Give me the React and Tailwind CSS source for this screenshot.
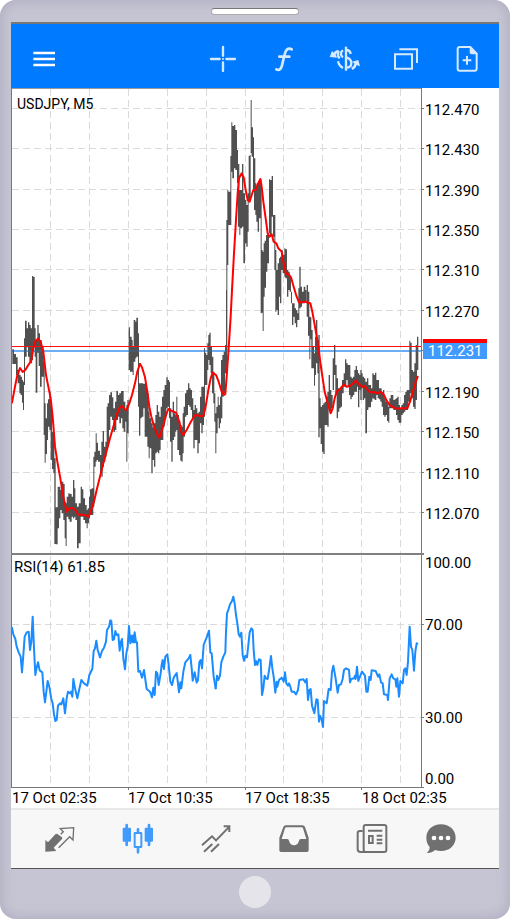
import React from "react";

// Chart series are stored in thirds of a pixel, section by section.
// Each bar is: left edge, right edge, high, low.
const sections = [
  {
    x: 0,
    y: 780,
    bars: `37 42 268 312|42 48 282 312|48 53 292 345|53 58 330 370|58 62 345 400|62 66 350 405|66 69 360 428|69 72 365 450|72 75 235 375|75 80 182 290|80 84 205 262|84 88 187 290|88 92 195 305|92 96 205 310|96 99 48 300|99 104 50 262|104 107 205 290|107 112 240 398|112 116 195 278|116 120 220 318|120 125 240 380|125 131 260 350|131 134 305 525|134 137 430 608|137 141 475 582|141 144 430 540|144 148 418 500|148 152 395 510|152 156 435 600|156 160 515 627|160 163 525 640|163 167 595 852|167 173 742 853|173 177 680 805|177 181 680 775|181 185 690 750|185 190 665 760|190 194 672 780|194 197 725 835|197 200 730 858|200 205 710 770|205 209 700 778|209 215 702 785|215 219 710 770|219 223 660 775|223 226 685 770|226 231 730 780|231 236 740 865|236 242 730 850|242 246 680 770|246 250 688 770|250 255 715 780|255 260 735 790|260 263 750 805|263 267 745 790|267 270 710 775|270 275 688 765|275 280 685 765|280 283 590 740|283 287 575 620|287 290 520 605|290 294 548 600|294 300 572 605|300 304 585 640|304 308 545 650|308 312 513 620|312 316 560 605|316 320 545 590|320 323 440 570|323 327 430 560|327 331 405 510|331 336 397 470|336 340 412 480|340 345 445 515|345 349 425 510|349 354 393 480|354 358 405 470|358 363 400 490|363 367 393 475|367 371 393 505|371 376 425 515|376 379 450 485|379 382 435 605|382 386 420 520`,
    average:
      "36,428 45,380 52,345 60,324 68,336 76,330 85,315 94,302 100,265 107,242 114,236 122,245 130,275 138,345 146,385 152,415 158,470 165,560 172,605 180,650 190,710 196,738 200,755 208,745 218,744 228,752 234,764 245,764 256,766 266,770 274,750 282,725 290,690 310,610 330,535 350,465 358,445 366,438 374,448 380,450 388,430 396,405 405,370 412,335 420,312",
  },
  {
    x: 360,
    y: 870,
    bars: `26 30 112 240|30 35 140 245|35 38 150 245|38 41 170 255|41 46 90 215|46 49 95 205|49 54 83 200|54 57 130 350|57 61 280 437|61 65 280 385|65 70 280 380|70 74 282 355|74 78 280 440|78 82 300 440|82 86 310 470|86 89 365 505|89 94 385 475|94 98 400 550|98 102 412 510|102 106 400 530|106 110 375 490|110 114 345 485|114 118 365 490|118 122 380 480|122 126 350 450|126 130 320 450|130 134 300 410|134 139 285 385|139 143 262 355|143 147 270 350|147 150 275 385|150 154 355 455|154 158 380 515|158 162 335 450|162 166 370 440|166 169 375 425|169 172 320 420|172 177 375 480|177 181 395 495|181 185 405 512|185 188 410 515|188 191 370 490|191 195 350 440|195 199 310 380|199 204 300 375|204 208 280 345|208 212 295 350|212 216 300 360|216 220 325 385|220 224 360 475|224 228 345 450|228 232 355 450|232 236 370 490|236 240 365 460|240 244 320 400|244 248 290 430|248 252 290 405|252 255 175 380|255 258 188 285|258 262 195 285|262 265 160 240|265 268 135 210|268 272 128 225|272 276 170 250|276 280 200 310|280 283 245 340|283 286 310 395|286 289 370 490|289 293 350 430|293 296 320 385|296 300 345 415|300 303 320 400|303 307 210 385|307 311 195 320|311 315 185 310|315 318 165 250|318 321 0 245`,
    average:
      "60,222 66,232 75,262 82,305 88,350 94,380 102,408 110,430 118,443 124,425 132,400 138,375 145,357 155,363 168,368 178,395 185,430 190,435 200,420 210,400 225,375 240,378 250,378 257,350 265,300 272,265 278,248 288,255 296,275 305,305 312,315 316,312 320,260 326,175 332,80 336,0",
  },
  {
    x: 645,
    y: 270,
    bars: `34 37 390 780|37 40 300 525|40 46 305 405|46 49 198 405|49 52 97 245|52 57 108 265|57 61 105 235|61 66 120 240|66 69 180 280|69 73 222 410|73 76 300 435|76 81 300 415|81 85 222 410|85 90 310 520|90 94 330 460|94 98 345 470|98 101 310 425|101 104 198 330|104 107 195 330|107 110 30 190|110 114 112 200|114 117 142 305|117 121 205 360|121 124 280 375|124 128 290 395|128 132 280 425|132 137 270 385|137 140 270 670|140 143 480 668|143 146 485 723|146 149 460 620|149 153 452 593|153 157 435 545|157 162 430 520|162 165 268 430|165 170 270 435|170 174 258 380|174 178 375 440|178 181 375 540|181 184 480 665|184 188 540 660|188 192 520 675|192 195 505 620|195 199 500 640|199 203 480 540|203 208 495 550|208 211 475 560|211 216 478 565|216 220 540 620|220 224 545 600|224 228 560 605|228 231 605 640|231 235 640 705|235 239 640 680|239 243 655 700|243 247 660 712|247 250 670 690|250 253 595 690|253 257 530 655|257 261 590 650|261 266 605 640|266 271 590 640|271 275 600 635`,
    average:
      "51,600 57,490 63,390 68,310 72,265 80,250 86,262 92,300 98,330 104,335 110,315 115,300 122,300 128,283 136,267 140,290 145,335 152,385 158,430 164,440 170,433 176,455 184,460 190,475 200,485 206,520 213,552 220,552 228,562 236,590 245,620 252,637 262,637 270,635 278,638 286,640 292,665 300,710 306,745 311,775",
  },
  {
    x: 900,
    y: 960,
    bars: `20 24 -105 -10|24 28 -85 47|28 31 -10 118|31 34 -8 58|34 38 30 145|38 42 80 145|42 45 100 197|45 48 50 165|48 52 0 130|52 55 60 160|55 59 45 352|59 62 235 325|62 66 260 372|66 70 255 395|70 74 250 402|74 78 245 315|78 82 230 315|82 86 215 320|86 90 165 260|90 94 210 270|94 98 225 265|98 102 115 210|102 106 75 165|106 110 135 225|110 114 175 295|114 118 205 275|118 122 210 265|122 126 200 260|126 131 180 220|131 135 160 200|135 139 118 200|139 143 130 180|143 147 135 200|147 151 135 225|151 155 170 238|155 159 175 230|159 163 170 225|163 167 150 215|167 171 138 215|171 174 150 200|174 178 160 262|178 181 165 210|181 185 150 240|185 188 160 205|188 192 170 240|192 196 175 235|196 201 185 340|201 205 175 270|205 209 195 262|209 213 195 262|213 217 205 245|217 221 160 235|221 225 165 238|225 229 158 240|229 233 180 225|233 237 180 235|237 241 205 238|241 245 205 245|245 249 215 260|249 253 210 285|253 257 235 290|257 261 245 285|261 265 250 303|265 268 260 308|268 272 235 265|272 276 225 265|276 280 225 265|280 284 240 270|284 288 238 270|288 292 235 285|292 296 230 300|296 300 255 308|300 304 265 308|304 308 255 285|308 312 250 280|312 316 225 275|316 320 215 270|320 324 210 270|324 328 210 245|328 331 62 245|331 335 68 220|335 339 150 235|339 343 155 260|343 347 130 267|347 351 75 240|351 355 50 150`,
    average:
      "56,85 62,135 68,175 74,215 82,245 92,280 98,265 104,235 110,215 120,207 132,193 140,200 150,198 160,190 168,182 176,192 186,200 194,198 202,208 210,217 222,216 234,220 242,215 252,225 260,242 270,256 280,262 290,266 305,265 322,265 330,245 340,212 346,190 353,170",
  },
];

const rsi = [
  {
    x: 0,
    points:
      "36,248 40,268 46,282 50,305 56,322 62,335 66,382 70,330 74,275 80,262 86,260 90,315 94,290 98,215 102,310 106,390 110,368 114,352 119,376 127,382 131,440 135,472 139,440 143,408 148,425 154,462 158,475 162,508 166,528 170,525 174,482 180,475 184,478 190,460 195,505 200,460 204,440 210,445 213,440 217,455 220,402 225,430 232,460 238,432 244,405 252,415 262,422 268,390 277,372 281,318 285,310 289,287 293,315 300,337 306,318 312,308 318,290 321,255 327,245 331,226 334,228 338,285 342,283 346,258 350,270 355,268 359,317 363,290 366,282 370,340 375,373 379,325 383,305 387,243 391,295 395,272 398,292 401,270 402,292 404,262 408,292 411,292 415,380 420,378 426,398 432,375 440,432 450,440 456,457 460,428 464,450 468,380 472,385 476,420 482,385 485,360 488,345 492,372 496,335 502,328 506,360 511,410 516,420 521,398 530,384 534,415 537,442 541,412 544,430 550,380 556,352 566,340 571,330 575,370 578,407 584,382 590,413 594,405 598,352 602,345 606,370 611,300 617,285 621,275 627,257 631,322 635,325 641,395 647,430",
  },
  {
    x: 630,
    points:
      "17,430 21,392 25,405 30,392 34,352 40,335 46,322 48,260 51,205 55,195 60,178 66,168 70,155 74,175 78,210 82,235 86,268 90,275 94,263 98,330 102,347 106,332 111,337 115,300 119,262 124,250 128,255 131,315 135,360 138,348 142,360 147,343 152,345 156,450 160,430 164,392 168,400 173,402 178,370 183,333 187,370 191,395 196,443 200,410 202,425 207,405 215,398 221,410 225,382 229,415 234,422 237,415 241,425 245,440 252,440 258,448 264,435 268,405 280,403 286,412 290,402 294,465 298,435 302,432 306,482 313,505 319,463 323,465 327,530 330,512 334,520 339,546 342,468 350,475 356,432 362,435 366,380 370,362 376,395 383,443 387,420 393,418 398,402 402,375 408,370 417,375 420,412 424,402 432,400 435,392 437,402 441,365 445,408 450,395 456,380 465,392 469,440 473,440 478,395 482,405 485,376 497,378 504,395 508,388 513,412 518,415 522,448 532,450 534,465 539,400 545,388 550,400 556,403 559,425 562,400 567,455 571,408 578,415 582,375 586,370 590,390 594,350 599,245 603,305 607,315 612,377 616,320 620,295 622,296",
  },
];

const barPath = (bars) =>
  bars
    .split("|")
    .map((bar) => {
      const [left, right, high, low] = bar.split(" ");
      return `M${left} ${high}H${right}V${low}H${left}Z`;
    })
    .join("");

const prices = [
  [109, "112.470"],
  [149, "112.430"],
  [190, "112.390"],
  [230, "112.350"],
  [270, "112.310"],
  [311, "112.270"],
  [351, null],
  [392, "112.190"],
  [432, "112.150"],
  [473, "112.110"],
  [513, "112.070"],
];
const columns = [50, 89, 128, 167, 206, 245, 283, 322, 361, 400];
const times = [
  [12, "17 Oct 02:35"],
  [128, "17 Oct 10:35"],
  [245, "17 Oct 18:35"],
  [362, "18 Oct 02:35"],
];

function Chart() {
  return (
    <svg
      viewBox="11 88 488 720"
      role="img"
      aria-label="USDJPY five minute chart with RSI"
      className="block w-full bg-white text-[15px]"
    >
      <g stroke="#dadada" strokeDasharray="7 4" shapeRendering="crispEdges">
        {columns.map((x) => (
          <path key={x} d={`M${x + 0.5} 89V553M${x + 0.5} 556V786`} />
        ))}
        {prices.map(([y]) => (
          <path key={y} d={`M12 ${y - 0.5}H421`} />
        ))}
        <path d="M12 624.5H421M12 717.5H421" />
      </g>

      <path d="M12 351H421" stroke="#7fbdff" strokeWidth="2" />
      {sections.map((s) => (
        <g key={s.x} transform={`scale(.33333) translate(${s.x} ${s.y})`}>
          <path d={barPath(s.bars)} fill="#505050" />
        </g>
      ))}
      <path d="M12 351H421" stroke="#2f7fd0" strokeOpacity=".45" strokeWidth="1" />
      <path d="M12 346.5H421" stroke="#ff1010" strokeWidth="1" />
      {sections.map((s) => (
        <g key={s.x} transform={`scale(.33333) translate(${s.x} ${s.y})`}>
          <polyline points={s.average} fill="none" stroke="#ff0000" strokeWidth="6" strokeLinejoin="round" strokeLinecap="round" />
        </g>
      ))}
      {rsi.map((s) => (
        <g key={s.x} transform={`scale(.33333) translate(${s.x} 1635)`}>
          <polyline points={s.points} fill="none" stroke="#1a8cff" strokeWidth="6" strokeLinejoin="round" strokeLinecap="round" />
        </g>
      ))}

      <g stroke="#777" shapeRendering="crispEdges">
        <path d="M11 88.5H422" stroke="#999" />
        <path d="M11.5 88V787" />
        <path d="M421.5 88V787" />
        <path d="M11 787.5H422" />
        <path d="M11 554H424" stroke="#808080" strokeWidth="2" />
        <path d="M128.5 787V790M245.5 787V790M361.5 787V790" />
        {prices.map(([y]) => (
          <path key={y} d={`M422 ${y - 0.5}H424`} />
        ))}
        <path d="M422 624.5H424M422 717.5H424M422 787.5H424" />
      </g>

      <g fill="#000">
        <text x="17" y="109" className="text-[14px]">USDJPY, M5</text>
        <text x="14" y="572">RSI(14) 61.85</text>
        {prices.map(([y, label]) =>
          label ? <text key={label} x="425" y={y + 6}>{label}</text> : null
        )}
        <text x="425" y="568">100.00</text>
        <text x="425" y="630">70.00</text>
        <text x="425" y="723">30.00</text>
        <text x="425" y="784">0.00</text>
        {times.map(([x, label]) => (
          <text key={label} x={x} y="803">{label}</text>
        ))}
      </g>

      <rect x="423" y="339" width="64" height="10" fill="#ff0000" />
      <rect x="423" y="343" width="64" height="16" fill="#419bff" />
      <text x="428" y="356" fill="#fff">112.231</text>
    </svg>
  );
}

function Icon({ children }) {
  return (
    <svg viewBox="0 0 96 96" className="size-8" fill="none" stroke="currentColor" strokeWidth="6" aria-hidden="true">
      {children}
    </svg>
  );
}

const tools = [
  {
    label: "Crosshair",
    art: (
      <g strokeWidth="7" strokeLinecap="round">
        <path d="M12 48H38M58 48H84M48 12V38M48 58V84" />
        <circle cx="48" cy="48" r="3" fill="currentColor" stroke="none" />
      </g>
    ),
  },
  {
    label: "Indicators",
    art: <path d="M25 79C34 84 39 78 42 67L50 34C53 19 60 14 71 19M34 41H64" strokeWidth="8" strokeLinecap="round" />,
  },
  {
    label: "Symbols",
    art: (
      <g strokeWidth="7">
        <path d="M51 11V83" />
        <path d="M65 33C64 25 59 21 51 21M51 43C61 46 67 51 67 60C67 69 60 74 51 74M42 22C34 27 33 37 42 43M30 24C25 32 26 40 32 46M27 55C29 64 34 71 42 75" />
        <path d="M2 42L9 24L14 29C18 24 22 22 28 21L30 28C25 29 21 32 20 36L25 44Z" fill="currentColor" stroke="none" />
        <path d="M93 70L88 51L69 56L76 61C75 68 73 71 67 74L70 81C78 77 82 72 83 66Z" fill="currentColor" stroke="none" />
      </g>
    ),
  },
  {
    label: "Windows",
    art: <path d="M15 34H66V77H15ZM28 19H81V60" />,
  },
  {
    label: "New order",
    art: (
      <g>
        <path d="M27 12H58L77 32V77Q77 83 71 83H26Q20 83 20 77V18Q20 12 27 12Z" />
        <path d="M56 10L80 34H62Q56 34 56 28Z" fill="currentColor" stroke="none" />
        <path d="M35 52H61M48 39V65" />
      </g>
    ),
  },
];

const tabs = [
  {
    label: "Quotes",
    art: (
      <g strokeWidth="4">
        <path d="M4 86V51L12 58L34 34Q37 31 40 33L53 42Q57 45 54 48L29 74L37 84Z" fill="currentColor" stroke="none" />
        <path d="M50 34L58 26L49 17L89 14L87 51L77 41L44 74" />
      </g>
    ),
  },
  {
    label: "Chart",
    active: true,
    art: (
      <g>
        <path d="M14 6V66M81 6V66" strokeWidth="8" strokeLinecap="round" />
        <path d="M2 17Q2 14 5 14H24Q27 14 27 17V53Q27 56 24 56H5Q2 56 2 53ZM68 17Q68 14 71 14H90Q93 14 93 17V53Q93 56 90 56H71Q68 56 68 53Z" fill="currentColor" stroke="none" />
        <rect x="38" y="30" width="20" height="42" rx="1" />
        <path d="M48 19V28M48 75V88" strokeWidth="8" strokeLinecap="round" />
      </g>
    ),
  },
  {
    label: "Trade",
    art: <path d="M6 67L36 40L48 52L86 13M71 10H88V27M12 86L37 63M33 86L57 63" />,
  },
  {
    label: "History",
    art: (
      <path
        fill="currentColor"
        stroke="none"
        fillRule="evenodd"
        d="M23 7H74Q79 7 81 12L92 44V82Q92 87 87 87H9Q4 87 4 82V44L16 12Q18 7 23 7ZM25 13Q22 13 21 16L11 48H28Q32 48 33 53C37 71 59 71 63 53Q64 48 68 48H85L75 16Q74 13 71 13Z"
      />
    ),
  },
  {
    label: "News",
    art: (
      <g>
        <rect x="23" y="6" width="68" height="81" rx="6" />
        <path d="M20 24H12Q5 24 5 31V78Q5 87 14 87H30M36 23H79M62 38H79M62 50H79M62 61H79" />
        <rect x="39" y="39" width="11" height="21" />
      </g>
    ),
  },
];

function MessageIcon() {
  return (
    <Icon>
      <path
        d="M48 4C73 4 92 21 92 44C92 67 73 84 48 84C42 84 36 83 30 81C24 87 14 91 5 90C11 85 14 79 14 72C7 64 4 55 4 44C4 21 23 4 48 4Z"
        fill="currentColor"
        stroke="none"
      />
      <g fill="#fff" stroke="none">
        <circle cx="27" cy="45" r="7" />
        <circle cx="48" cy="45" r="7" />
        <circle cx="69" cy="45" r="7" />
      </g>
    </Icon>
  );
}

export default function App() {
  return (
    <div className="bg-white font-[Roboto,sans-serif]">
      <div className="flex flex-col rounded-2xl bg-[#c6c5d3] px-[11px] shadow-[inset_0_0_14px_#aaa8bc]">
        <div className="flex h-[22px] items-center justify-center">
          <div className="h-[7px] w-[88px] rounded-sm border border-[#aaa] border-t-[#777] bg-white" />
        </div>

        <main>
          <header className="flex h-[66px] items-center justify-between border-t-2 border-t-[#777] bg-[#007aff] pt-1.5 pr-0.5">
            <button type="button" aria-label="Menu" className="flex h-12 w-[66px] items-center justify-center text-white">
              <Icon>
                <path d="M16 30H81M16 48H81M16 66H81" strokeWidth="7" />
              </Icon>
            </button>
            <div className="flex">
              {tools.map((tool) => (
                <button key={tool.label} type="button" aria-label={tool.label} className="flex h-12 w-[61px] items-center justify-center text-[#d6eaff]">
                  <Icon>{tool.art}</Icon>
                </button>
              ))}
            </div>
          </header>

          <Chart />

          <nav className="flex h-[61px] items-center border-t-2 border-b border-t-[#e8e8e8] border-b-[#555] bg-[#f7f7f7] pr-7 pl-2.5 text-[#707070]">
            {tabs.map((tab) => (
              <button
                key={tab.label}
                type="button"
                aria-label={tab.label}
                className={tab.active ? "flex h-12 flex-[78] items-center justify-center text-[#419bff]" : "flex h-12 flex-[78] items-center justify-center"}
              >
                <Icon>{tab.art}</Icon>
              </button>
            ))}
            <button type="button" aria-label="Messages" className="flex h-12 flex-[60] items-center justify-center">
              <MessageIcon />
            </button>
          </nav>
        </main>

        <div className="flex h-[50px] items-center justify-center pb-1">
          <button type="button" aria-label="Home" className="size-8 rounded-full bg-[#e4e4ea]" />
        </div>
      </div>
    </div>
  );
}
